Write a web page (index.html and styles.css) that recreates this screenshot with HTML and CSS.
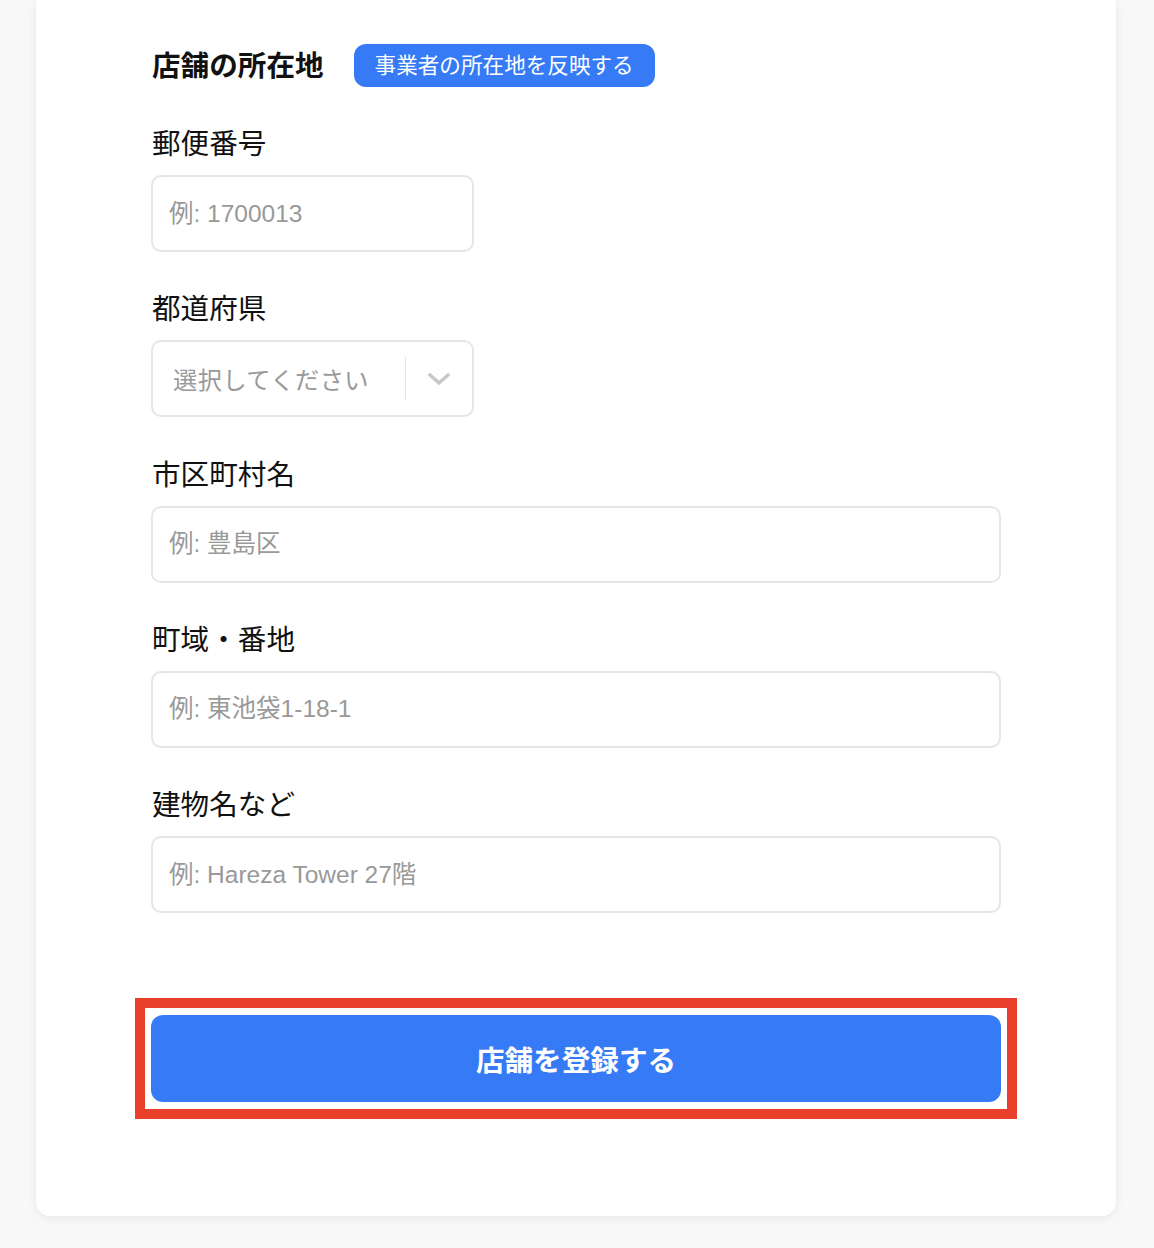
FILE: index.html
```html
<!DOCTYPE html>
<html lang="ja">
<head>
<meta charset="utf-8">
<title>店舗の所在地</title>
<link rel="stylesheet" href="styles.css">
</head>
<body>
<div class="page">
  <div class="card">
    <div class="section-head">
      <h2 class="section-title">店舗の所在地</h2>
      <button class="badge-btn" type="button">事業者の所在地を反映する</button>
    </div>
    <div class="fields">
      <div class="field">
        <label class="field-label">郵便番号</label>
        <input class="text-input short" type="text" placeholder="例: 1700013">
      </div>
      <div class="field">
        <label class="field-label">都道府県</label>
        <div class="select short">
          <span class="select-value">選択してください</span>
          <span class="select-sep"></span>
          <span class="select-arrow">
            <svg width="22" height="12" viewBox="0 0 22 12"><polyline points="2,2 11,10 20,2" fill="none" stroke="#c8c8c8" stroke-width="3.6" stroke-linecap="round" stroke-linejoin="round"/></svg>
          </span>
        </div>
      </div>
      <div class="field">
        <label class="field-label">市区町村名</label>
        <input class="text-input" type="text" placeholder="例: 豊島区">
      </div>
      <div class="field">
        <label class="field-label">町域・番地</label>
        <input class="text-input" type="text" placeholder="例: 東池袋1-18-1">
      </div>
      <div class="field">
        <label class="field-label">建物名など</label>
        <input class="text-input" type="text" placeholder="例: Hareza Tower 27階">
      </div>
    </div>
    <div class="submit-wrap">
      <button class="submit-btn" type="button">店舗を登録する</button>
    </div>
  </div>
</div>
</body>
</html>
```

FILE: styles.css
```css
* { box-sizing: border-box; }
html, body { margin: 0; padding: 0; }
body {
  background: #f8f8f8;
  font-family: "Liberation Sans", "Noto Sans CJK JP", sans-serif;
  color: #111;
}
.page {
  padding: 0 38px 31px 36px;
}
.card {
  background: #fff;
  border-radius: 0 0 14px 14px;
  box-shadow: 0 2px 10px rgba(0, 0, 0, 0.07);
  padding: 44px 115px 114px 115px;
  display: flex;
  flex-direction: column;
}
.section-head {
  display: flex;
  align-items: center;
  gap: 30px;
  height: 43px;
}
.section-title {
  margin: 0;
  font-size: 28.6px;
  font-weight: 700;
  line-height: 36px;
  padding-left: 1px;
}
.badge-btn {
  height: 43px;
  border: none;
  border-radius: 12px;
  background: #367bf5;
  color: #fff;
  font-family: inherit;
  font-size: 21.6px;
  padding: 0 21px;
  line-height: 43px;
}
.fields {
  display: flex;
  flex-direction: column;
  gap: 39.3px;
  margin-top: 39px;
}
.field {
  display: flex;
  flex-direction: column;
  align-items: flex-start;
}
.field-label {
  font-size: 28.6px;
  line-height: 37px;
  margin-bottom: 12px;
  padding-left: 1px;
}
.text-input {
  width: 100%;
  height: 77px;
  border: 2px solid #e6e6e6;
  border-radius: 10px;
  padding: 0 16px;
  font-family: inherit;
  font-size: 24.5px;
  color: #111;
  background: #fff;
  outline: none;
}
.text-input::placeholder { color: #999999; }
.short { width: 323px; }
.select {
  height: 77px;
  border: 2px solid #e6e6e6;
  border-radius: 10px;
  display: flex;
  align-items: center;
  padding-left: 20px;
  background: #fff;
}
.select-value {
  flex: 1;
  font-size: 24.2px;
  color: #999999;
  letter-spacing: 0.5px;
}
.select-sep {
  width: 1px;
  height: 43px;
  background: #e6e6e6;
}
.select-arrow {
  width: 66px;
  display: flex;
  justify-content: center;
  align-items: center;
}
.select-arrow svg { display: block; }
.submit-wrap {
  position: relative;
  margin-top: 102px;
}
.submit-wrap::after {
  content: "";
  position: absolute;
  top: -17px;
  bottom: -17px;
  left: -16px;
  right: -16px;
  border: 10px solid #e8402a;
  pointer-events: none;
}
.submit-btn {
  display: block;
  height: 87px;
  width: 100%;
  border: none;
  border-radius: 12px;
  background: #367bf5;
  color: #fff;
  font-family: inherit;
  font-size: 28.6px;
  font-weight: 700;
}
```
